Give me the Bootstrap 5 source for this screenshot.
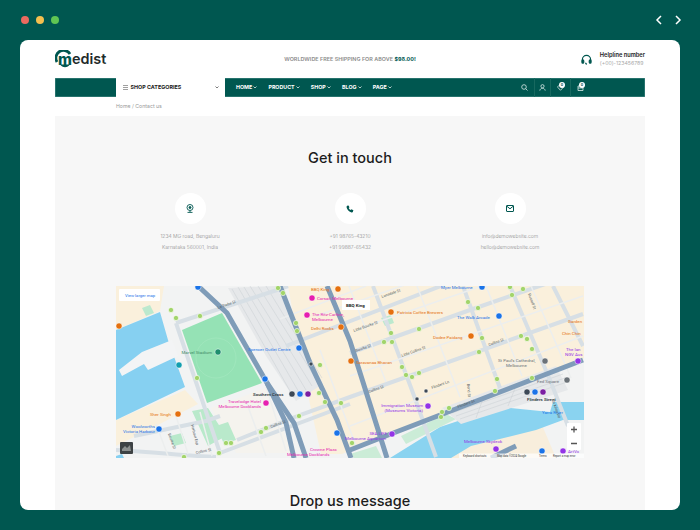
<!DOCTYPE html>
<html lang="en">
<head>
    <meta charset="utf-8">
    <meta name="viewport" content="width=device-width, initial-scale=1.0">
    <title>Medist - Contact us</title>
    <link href="https://cdn.jsdelivr.net/npm/bootstrap@5.3.0/dist/css/bootstrap.min.css" rel="stylesheet">
    <style>
        html, body { height: 530px; overflow: hidden; }
        body { background: #005750; font-family: Inter, "Liberation Sans", sans-serif; color: #1c1c1c; }
        .topbar { height: 40px; padding: 0 18px 0 21px; }
        .dot-red, .dot-yellow, .dot-green { width: 8px; height: 8px; border-radius: 50%; }
        .dot-red { background: #ec6a5f; }
        .dot-yellow { background: #f4bf4f; }
        .dot-green { background: #61c553; }
        .dots-gap { gap: 7px; }
        .arrows-gap { gap: 11px; }
        .shot { height: 470px; margin: 0 20px; background: #fff; border-radius: 8px; overflow: hidden; padding: 0 35px; }
        .site-head { height: 38px; }
        .head-side { flex: 1 1 0; }
        .brand { font-size: 14.4px; font-weight: 600; line-height: 1; color: #1e2a2a; }
        .brand svg { margin-right: -1px; }
        .ship-text { font-size: 5.4px; font-weight: 600; color: #8b8b8b; letter-spacing: .03px; }
        .ship-text b { color: #005750; font-weight: 700; }
        .help-title { font-size: 5.7px; font-weight: 600; color: #222; line-height: 9px; }
        .help-phone { font-size: 5.2px; color: #a9a9a9; line-height: 9px; }
        .main-bar { height: 19px; background: #005750; box-shadow: inset 0 0 0 .5px #4f8f8a; }
        .bar-left { width: 61px; }
        .cat-box { width: 109px; background: #fff; padding: 0 6px 0 6.500px; font-size: 5.4px; font-weight: 700; color: #222; }
        .cat-box svg:first-child { margin-right: 3px; }
        .menu-item { font-size: 5.3px; font-weight: 700; color: #fff; }
        .menu-list { padding-left: 11px; gap: 11px; }
        .bar-icons { padding-right: 55px; }
        .bar-icon { width: 16px; height: 19px; border-left: .5px solid #17685f; position: relative; }
        .bar-icon-wide { width: 20px; }
        .bar-icon-plain { border-left: 0; width: 20px; }
        .mini-badge { position: absolute; top: 4px; right: 5px; width: 6px; height: 6px; border-radius: 50%; background: #fff; color: #005750; font-size: 3.500px; line-height: 6px; text-align: center; font-weight: 700; }
        .crumb-row { height: 19px; padding-left: 61px; font-size: 5.2px; color: #9a9a9a; }
        .panel { height: 394px; background: #f7f7f7; padding: 0 61px; }
        .panel-title { font-size: 14.5px; font-weight: 500; color: #1c1c1c; line-height: 20px; margin: 0; }
        .title-one { padding-top: 32px; }
        .info-row { margin-top: 25px; }
        .info-col { width: 148px; }
        .info-circle { width: 31px; height: 31px; border-radius: 50%; background: #fff; }
        .info-line { font-size: 5px; font-weight: 300; color: #8f8f8f; line-height: 11px; }
        .info-text { margin-top: 7px; }
        .map-box { position: relative; height: 172px; margin-top: 33px; overflow: hidden; background: #f1f2f3; }
        .map-box svg { display: block; }
        .title-two { margin-top: 33px; }
        .t { font-family: Roboto, "Liberation Sans", sans-serif; font-size: 4.4px; }
        .t-o { fill: #e5700f; } .t-p { fill: #e61fb0; } .t-b { fill: #1a73e8; } .t-v { fill: #9334e6; }
        .t-g { fill: #6b7278; } .t-d { fill: #333c42; font-weight: 600; } .t-s { fill: #555e63; font-size: 3.8px; }
        .t-m { fill: #3f8a66; }
        .hw { fill: none; stroke: #7f9cb8; stroke-width: 5; }
        .rd { fill: none; stroke: #d7dfe5; stroke-width: 4; }
        .rd2 { fill: none; stroke: #eceeee; stroke-width: 1.500; }
        .rl { fill: none; stroke: #c9ced2; stroke-width: .5; }
        .dots circle { fill: #a2d46a; stroke: #fff; stroke-width: .6; r: 2.600px; }
        .pin { r: 3.100px; stroke: #fff; stroke-width: .5; }
    </style>
</head>

<body>
<div class="topbar d-flex align-items-center dots-gap">
    <span class="dot-red"></span>
    <span class="dot-yellow"></span>
    <span class="dot-green"></span>
    <div class="ms-auto d-flex arrows-gap">
        <svg width="8" height="10" viewBox="0 0 8 10" fill="none" stroke="#fff" stroke-width="1.500"><path d="M6 1 2 5l4 4"/></svg>
        <svg width="8" height="10" viewBox="0 0 8 10" fill="none" stroke="#fff" stroke-width="1.500"><path d="M2 1l4 4-4 4"/></svg>
    </div>
</div>

<div class="shot">
    <!-- logo, shipping note, helpline -->
    <div class="site-head d-flex align-items-center justify-content-between">
        <div class="head-side brand d-flex align-items-center">
            <svg width="18" height="18" viewBox="0 0 18 18">
                <path d="M2 12A7.500 7.500 0 1 1 15 4" fill="none" stroke="#005750" stroke-width="2.800"/>
                <text x="10" y="14.500" text-anchor="middle" fill="#005750" font-size="15" font-weight="800">m</text>
                <path d="M5 14.500h10A6 6 0 0 1 5 14.500z" fill="#005750"/>
            </svg>
            <span>edist</span>
        </div>
        <div class="ship-text">WORLDWIDE FREE SHIPPING FOR ABOVE <b>$98.00!</b></div>
        <div class="head-side d-flex align-items-center justify-content-end gap-2">
            <svg width="11" height="11" viewBox="0 0 12 12" fill="none" stroke="#005750" stroke-width="1.300">
                <path d="M1.500 7.500V6a4.500 4.500 0 0 1 9 0v1.500"/>
                <rect x="1" y="6.500" width="2" height="3.500" rx="1" fill="#005750"/>
                <rect x="9" y="6.500" width="2" height="3.500" rx="1" fill="#005750"/>
                <path d="M5 9.500c0 1 .5 1.500 1.500 1.500"/>
            </svg>
            <div>
                <div class="help-title">Helpline number</div>
                <div class="help-phone">(+00)-123456789</div>
            </div>
        </div>
    </div>

    <!-- main menu -->
    <nav class="main-bar d-flex align-items-stretch">
        <div class="bar-left"></div>
        <div class="cat-box d-flex align-items-center">
            <svg width="5" height="5" viewBox="0 0 5 5" stroke="#777" stroke-width=".7"><path d="M0 .5h5M0 2.500h5M0 4.500h5"/></svg>
            <span>SHOP CATEGORIES</span>
            <svg class="ms-auto" width="4" height="3" viewBox="0 0 4 3" fill="none" stroke="#444" stroke-width=".7"><path d="M.5.5 2 2 3.500.5"/></svg>
        </div>
        <div class="menu-list d-flex align-items-center">
            <span class="menu-item">HOME <svg width="4" height="3" viewBox="0 0 4 3" fill="none" stroke="#fff" stroke-width=".7"><path d="M.5.5 2 2 3.500.5"/></svg></span>
            <span class="menu-item">PRODUCT <svg width="4" height="3" viewBox="0 0 4 3" fill="none" stroke="#fff" stroke-width=".7"><path d="M.5.5 2 2 3.500.5"/></svg></span>
            <span class="menu-item">SHOP <svg width="4" height="3" viewBox="0 0 4 3" fill="none" stroke="#fff" stroke-width=".7"><path d="M.5.5 2 2 3.500.5"/></svg></span>
            <span class="menu-item">BLOG <svg width="4" height="3" viewBox="0 0 4 3" fill="none" stroke="#fff" stroke-width=".7"><path d="M.5.5 2 2 3.500.5"/></svg></span>
            <span class="menu-item">PAGE <svg width="4" height="3" viewBox="0 0 4 3" fill="none" stroke="#fff" stroke-width=".7"><path d="M.5.5 2 2 3.500.5"/></svg></span>
        </div>
        <div class="bar-icons ms-auto d-flex">
            <div class="bar-icon bar-icon-plain d-flex align-items-center justify-content-center">
                <svg width="7" height="7" viewBox="0 0 7 7" fill="none" stroke="#d9ebe8" stroke-width=".8"><circle cx="3" cy="3" r="2.300"/><path d="M4.700 4.700 6.500 6.500"/></svg>
            </div>
            <div class="bar-icon d-flex align-items-center justify-content-center">
                <svg width="7" height="7" viewBox="0 0 7 7" fill="none" stroke="#d9ebe8" stroke-width=".8"><circle cx="3.500" cy="2.200" r="1.600"/><path d="M.8 6.600c.4-3 5-3 5.400 0"/></svg>
            </div>
            <div class="bar-icon bar-icon-wide d-flex align-items-center justify-content-center">
                <svg width="7" height="7" viewBox="0 0 7 7" fill="none" stroke="#d9ebe8" stroke-width=".8"><path d="M3.500 6.300.9 3.500a1.500 1.500 0 0 1 2.600-1.400 1.500 1.500 0 0 1 2.600 1.400z"/></svg>
                <span class="mini-badge">0</span>
            </div>
            <div class="bar-icon bar-icon-wide d-flex align-items-center justify-content-center">
                <svg width="7" height="7" viewBox="0 0 7 7" fill="none" stroke="#d9ebe8" stroke-width=".8"><path d="M1 2h5v4.500H1zM2.500 2V1h2v1M1 4h5"/></svg>
                <span class="mini-badge">0</span>
            </div>
        </div>
    </nav>

    <div class="crumb-row d-flex align-items-center">Home / Contact us</div>

    <div class="panel text-center">
        <div class="title-one"><h2 class="panel-title">Get in touch</h2></div>

        <div class="info-row d-flex justify-content-between">
            <div class="info-col d-flex flex-column align-items-center">
                <div class="info-circle d-flex align-items-center justify-content-center">
                    <svg width="8" height="9" viewBox="0 0 8 9" fill="none" stroke="#005750" stroke-width=".9"><circle cx="4" cy="3.500" r="3"/><circle cx="4" cy="3.500" r="1" fill="#005750"/><path d="M4 6.500v1.500M1.500 8.400h5"/></svg>
                </div>
                <div class="info-text">
                    <div class="info-line">1234 MG road, Bengaluru</div>
                    <div class="info-line">Karnataka 560001, India</div>
                </div>
            </div>
            <div class="info-col d-flex flex-column align-items-center">
                <div class="info-circle d-flex align-items-center justify-content-center">
                    <svg width="8" height="8" viewBox="0 0 8 8"><path d="M1 .8 2.500.4l1 1.900-.8.8c.4.9 1 1.500 1.900 1.900l.9-.8 1.900 1.100-.5 1.500C7 7.300 6 7.600 5 7.200 2.800 6.300 1.400 4.700.7 2.700.4 2 .5 1.300 1 .8z" fill="#005750"/></svg>
                </div>
                <div class="info-text">
                    <div class="info-line">+91 98765-43210</div>
                    <div class="info-line">+91 99887-65432</div>
                </div>
            </div>
            <div class="info-col d-flex flex-column align-items-center">
                <div class="info-circle d-flex align-items-center justify-content-center">
                    <svg width="8" height="7" viewBox="0 0 8 7" fill="none" stroke="#005750" stroke-width="1"><rect x=".5" y=".5" width="7" height="6" rx=".5"/><path d="M.8 1.200 4 3.800l3.200-2.600"/></svg>
                </div>
                <div class="info-text">
                    <div class="info-line">info@demowebsite.com</div>
                    <div class="info-line">hello@demowebsite.com</div>
                </div>
            </div>
        </div>

        <!-- map picture -->
        <div class="map-box">
            <svg width="468" height="172" viewBox="0 0 468 172">
                <rect width="468" height="172" fill="#f2f3f3"/>
                <!-- city blocks -->
                <path d="M172 0H468V72L267 150 226 168H205L190 100z" fill="#faf0dc"/>
                <path d="M0 0H48L44 25 0 44zM0 134 69 104 82 118 40 140 0 160z" fill="#faf0dc"/>
                <path d="M95 122 150 102 176 167H120z" fill="#f5f3ee"/>
                <path d="M280 172 330 150 420 125 440 172z" fill="#f8eedc"/>
                <!-- water -->
                <path d="M0 44 44 26 52 54 69 101 0 134z" fill="#86d0f1"/>
                <path d="M26 66 56 54 62 70 32 84 28 78 6 90 3 84z" fill="#f3f4f5"/>
                <path d="M274 172 324 141 384 121 434 126 437 116H468V134H447L420 144 355 160 335 172z" fill="#8ad3f0"/>
                <path d="M0 170 6 168 8 172H0z" fill="#86d0f1"/>
                <!-- parks -->
                <path d="M66 44 106 27 146 97 91 117z" fill="#95e2b5"/>
                <circle cx="100" cy="72" r="20" fill="none" stroke="#a9e8c3" stroke-width=".5"/>
                <path d="M76 125 92 122 110 150 92 160zM100 140l12-4 8 18-12 4zM54 150l12-3 4 10-12 3z" fill="#b9e9cb"/>
                <path d="M26 22l8-3 4 8-8 3zM265 32l10-3 3 8-9 3z" fill="#bce9ce"/>
                <path d="M285 150 330 128 340 133 290 158zM234 168l26-8 6 12h-28z" fill="#cbecd7"/>
                <!-- rail yard -->
                <path d="M112 2 160 0 207 98 180 115 150 70z" fill="#e6e8ea"/>
                <path class="rl" d="M116 3 178 112M122 1 184 108M128 1 190 104M134 0 196 100M142 0 202 96M150 0 206 92"/>
                <path d="M326 122 440 80 452 104 345 138z" fill="#e6e8ea"/>
                <path class="rl" d="M332 124 444 84M336 127 447 88M340 130 449 92M344 133 451 96M368 110 360 132M400 100 392 120"/>
                <!-- streets -->
                <path class="rd" d="M60 37 161 4 172 0M60 37 104 167M121 154 184 129 234 111 467 28M234 67 354 24 467 -15M170 60 330 -2M0 164C40 166 70 170 100 171M257 0 297 107 320 171M347 0 381 94 384 102M394 0 434 94 452 140M437 0 467 60M104 167 234 118M104 130 90 135 18 150"/>
                <path class="rd2" d="M164 33 250 0M234 90 467 10M234 140 467 50M200 30 400 -40M244 42 430 -22M301 0 344 111M204 64 240 160M233 0 270 96M370 0 406 90M415 0 455 92M60 130 72 168M40 138 52 170M84 126 96 170M150 100 170 165M130 115 150 170"/>
                <!-- highways -->
                <path class="hw" d="M82 0 111 27 151 97 170 137 178 172"/>
                <path class="hw" d="M151 97 178 137 190 172" stroke-width="3.500"/>
                <path class="hw" d="M164 0 194 77 221 134 235 172"/>
                <path class="hw" d="M211 0 234 55 271 172"/>
                <path class="hw" d="M467 74 267 151 234 164" stroke-width="5.500"/>
                <path class="hw" d="M375 172 400 160" stroke-width="3.500"/>
                <!-- stop dots -->
                <g class="dots">
                    <circle cx="55" cy="24"/><circle cx="60" cy="32"/><circle cx="84" cy="30"/><circle cx="162" cy="2"/><circle cx="167" cy="7"/>
                    <circle cx="180" cy="37"/><circle cx="181" cy="45"/><circle cx="204" cy="79"/><circle cx="203" cy="107"/><circle cx="209" cy="116"/>
                    <circle cx="225" cy="117"/><circle cx="81" cy="92"/><circle cx="183" cy="130"/><circle cx="150" cy="142"/><circle cx="145" cy="146"/>
                    <circle cx="110" cy="157"/><circle cx="115" cy="157"/><circle cx="103" cy="167"/><circle cx="68" cy="171"/>
                    <circle cx="394" cy="1"/><circle cx="396" cy="9"/><circle cx="407" cy="3"/><circle cx="352" cy="16"/><circle cx="362" cy="22"/>
                    <circle cx="275" cy="47"/><circle cx="303" cy="43"/><circle cx="268" cy="56"/><circle cx="276" cy="56"/><circle cx="366" cy="52"/>
                    <circle cx="405" cy="50"/><circle cx="411" cy="53"/><circle cx="416" cy="63"/><circle cx="363" cy="66"/><circle cx="286" cy="81"/>
                    <circle cx="290" cy="89"/><circle cx="296" cy="91"/><circle cx="303" cy="87"/><circle cx="381" cy="93"/><circle cx="416" cy="92"/>
                    <circle cx="379" cy="105"/><circle cx="333" cy="122"/><circle cx="326" cy="126"/><circle cx="325" cy="131"/><circle cx="236" cy="157"/>
                </g>
                <!-- place pins -->
                <g>
                    <circle class="pin" cx="3" cy="40" fill="#e5700f"/><circle class="pin" cx="82" cy="1" fill="#1a73e8"/><circle class="pin" cx="102" cy="66" fill="#1e8e6e"/>
                    <circle class="pin" cx="63" cy="79" fill="#129eaf"/><circle class="pin" cx="183" cy="62" fill="#1a73e8"/><circle class="pin" cx="149" cy="93" fill="#1a73e8"/>
                    <circle class="pin" cx="176" cy="108" fill="#3c4856"/><circle class="pin" cx="184" cy="108" fill="#1a73e8"/><circle class="pin" cx="192" cy="108" fill="#7b1fa2"/>
                    <circle class="pin" cx="150" cy="117" fill="#e61fb0"/><circle class="pin" cx="62" cy="128" fill="#e5700f"/><circle class="pin" cx="43" cy="143" fill="#1a73e8"/>
                    <circle class="pin" cx="222" cy="3" fill="#e5700f"/><circle class="pin" cx="196" cy="12" fill="#e61fb0"/><circle class="pin" cx="191" cy="29" fill="#e61fb0"/>
                    <circle class="pin" cx="225" cy="41" fill="#e5700f"/><circle class="pin" cx="195" cy="78" fill="#3c4856" style="r:2px"/><circle class="pin" cx="221" cy="147" fill="#1a73e8"/>
                    <circle class="pin" cx="366" cy="1" fill="#1a73e8"/><circle class="pin" cx="275" cy="26" fill="#e5700f"/><circle class="pin" cx="383" cy="30" fill="#1a73e8"/>
                    <circle class="pin" cx="355" cy="50" fill="#e5700f"/><circle class="pin" cx="235" cy="75" fill="#e5700f"/><circle class="pin" cx="429" cy="75" fill="#6b7278"/>
                    <circle class="pin" cx="451" cy="94" fill="#6b7278"/><circle class="pin" cx="411" cy="106" fill="#3c4856"/><circle class="pin" cx="419" cy="106" fill="#1a73e8"/>
                    <circle class="pin" cx="427" cy="106" fill="#7b1fa2"/><circle class="pin" cx="312" cy="120" fill="#9334e6"/><circle class="pin" cx="276" cy="148" fill="#9334e6"/>
                    <circle class="pin" cx="380" cy="163" fill="#9334e6"/><circle class="pin" cx="462" cy="75" fill="#9334e6"/><circle class="pin" cx="447" cy="165" fill="#9334e6"/>
                    <circle class="pin" cx="310" cy="105" fill="#3c4856" style="r:2px"/><circle class="pin" cx="301" cy="113" fill="#3c4856" style="r:2px"/><circle class="pin" cx="426" cy="165" fill="#1a73e8"/>
                </g>
                <!-- labels -->
                <text class="t t-m" x="96" y="67.500" text-anchor="end">Marvel Stadium</text>
                <text class="t t-b" x="132" y="64.500">Spencer Outlet Centre</text>
                <text class="t t-d" x="137" y="109.500">Southern Cross</text>
                <text class="t t-p" x="145" y="116.500" text-anchor="end">Travelodge Hotel</text>
                <text class="t t-p" x="145" y="121.500" text-anchor="end">Melbourne Docklands</text>
                <text class="t t-o" x="34" y="130">Sher Singh</text>
                <text class="t t-b" x="39" y="142" text-anchor="end">Woolworths</text>
                <text class="t t-b" x="39" y="147" text-anchor="end">Victoria Harbour</text>
                <text class="t t-p" x="194" y="165">Crowne Plaza</text>
                <text class="t t-p" x="171" y="170">Melbourne Docklands</text>
                <text class="t t-p" x="196" y="29.500">The Ritz-Carlton,</text>
                <text class="t t-p" x="196" y="34.500">Melbourne</text>
                <text class="t t-p" x="201" y="13.500">Corsair Melbourne</text>
                <text class="t t-o" x="195" y="43.500">Delhi Rocks</text>
                <text class="t t-o" x="195" y="5">BBQ King</text>
                <text class="t t-b" x="325" y="2.500">Myer Melbourne</text>
                <text class="t t-o" x="281" y="27.500">Patricia Coffee Brewers</text>
                <text class="t t-b" x="341" y="32.500">The Walk Arcade</text>
                <text class="t t-o" x="317" y="52.500">Dodee Paidang</text>
                <text class="t t-o" x="240" y="77.500">Saravanaa Bhavan</text>
                <text class="t t-g" x="382" y="75.500">St Paul's Cathedral,</text>
                <text class="t t-g" x="390" y="80.500">Melbourne</text>
                <text class="t t-g" x="421" y="96.500">Fed Square</text>
                <text class="t t-d" x="411" y="114.500">Flinders Street</text>
                <text class="t t-v" x="307" y="120.500" text-anchor="end">Immigration Museum</text>
                <text class="t t-v" x="307" y="125.500" text-anchor="end">(Museums Victoria)</text>
                <text class="t t-v" x="271" y="149" text-anchor="end">SEA LIFE</text>
                <text class="t t-v" x="270" y="154" text-anchor="end">Melbourne Aquarium</text>
                <text class="t t-v" x="348" y="156.500">Melbourne Skydeck</text>
                <text class="t t-v" x="450" y="64.500">The Ian</text>
                <text class="t t-v" x="449" y="69.500">NGV Aus</text>
                <text class="t t-o" x="452" y="36.500">Garden</text>
                <text class="t t-o" x="446" y="48.500">Chin Chin</text>
                <text class="t t-b" x="426" y="127.500">Yarra River</text>
                <text class="t t-v" x="452" y="166.500">ArtVo</text>
                <text class="t t-s" transform="translate(102 23) rotate(-20)">La Trobe St</text>
                <text class="t t-s" transform="translate(266 12) rotate(-20)">Lonsdale St</text>
                <text class="t t-s" transform="translate(238 46) rotate(-20)">Little Bourke St</text>
                <text class="t t-s" transform="translate(240 66) rotate(-20)">Bourke St</text>
                <text class="t t-s" transform="translate(286 71) rotate(-20)">Little Collins St</text>
                <text class="t t-s" transform="translate(373 60) rotate(-20)">Collins St</text>
                <text class="t t-s" transform="translate(253 107) rotate(-20)">Collins St</text>
                <text class="t t-s" transform="translate(155 142) rotate(-20)">Collins St</text>
                <text class="t t-s" transform="translate(80 168) rotate(-12)">Collins St</text>
                <text class="t t-s" transform="translate(316 103) rotate(-20)">Flinders Ln</text>
                <text class="t t-s" transform="translate(342 122) rotate(-20)">Flinders St</text>
                <text class="t t-s" transform="translate(412 8) rotate(70)">Russell St</text>
                <text class="t t-s" transform="translate(351 98) rotate(85)">Bond St</text>
                <text class="t t-s" transform="translate(436 115) rotate(70)">St Kilda Rd</text>
                <text class="t t-s" transform="translate(75 139) rotate(75)">Harbour Esp</text>
                <text class="t t-s" transform="translate(52 148) rotate(70)">Bourke St</text>
                <!-- overlays -->
                <rect x="3" y="3" width="41" height="12" rx="1" fill="#fff"/>
                <text class="t t-b" x="9" y="10.500" style="font-size:4.200px">View larger map</text>
                <rect x="226" y="14" width="28" height="10" fill="#fff"/>
                <text class="t" x="230" y="20.500" fill="#222" font-weight="700">BBQ King</text>
                <rect x="4" y="156" width="13" height="12" rx="1" fill="#3d4244"/>
                <path d="M6 163l3-3 2 2 3-3 1 6H6z" fill="#8b8f8e"/>
                <rect x="451" y="137" width="14" height="27" rx="1" fill="#fff"/>
                <path d="M455 143.500h6M458 140.500v6M455 157.500h6" stroke="#555" stroke-width="1.300"/>
                <rect x="343" y="167.500" width="125" height="4.500" fill="#fff" fill-opacity=".7"/>
                <text class="t" x="347" y="170.800" fill="#333" style="font-size:2.700px">Keyboard shortcuts</text>
                <text class="t" x="381" y="170.800" fill="#333" style="font-size:2.700px">Map data ©2024 Google</text>
                <text class="t" x="423" y="170.800" fill="#333" style="font-size:2.700px">Terms</text>
                <text class="t" x="437" y="170.800" fill="#333" style="font-size:2.700px">Report a map error</text>
            </svg>
        </div>

        <div class="title-two"><h2 class="panel-title">Drop us message</h2></div>
    </div>
</div>

<script src="https://cdn.jsdelivr.net/npm/bootstrap@5.3.0/dist/js/bootstrap.bundle.min.js"></script>
</body>
</html>
